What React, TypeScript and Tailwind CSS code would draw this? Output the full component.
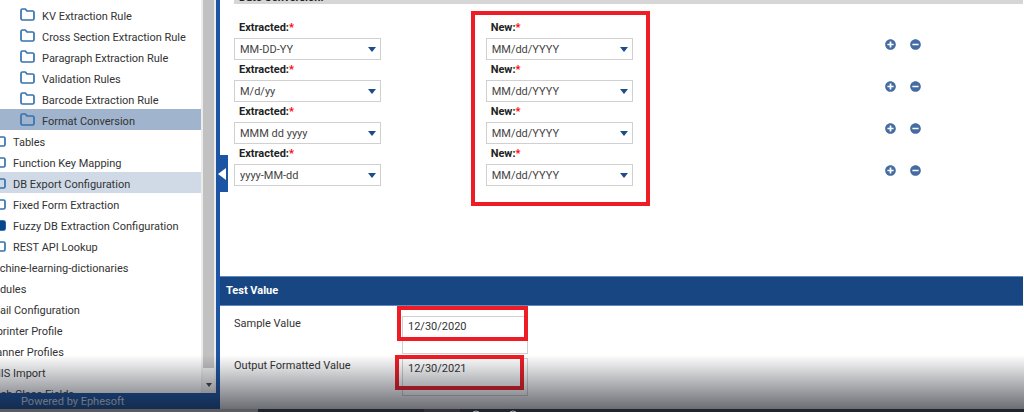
import { FaMinusCircle, FaPlusCircle } from "react-icons/fa";

const folders = [
  { name: "KV Extraction Rule" },
  { name: "Cross Section Extraction Rule" },
  { name: "Paragraph Extraction Rule" },
  { name: "Validation Rules" },
  { name: "Barcode Extraction Rule" },
  { name: "Format Conversion", selected: true },
];

const sections = [
  { name: "Tables" },
  { name: "Function Key Mapping" },
  { name: "DB Export Configuration", hovered: true },
  { name: "Fixed Form Extraction" },
  { name: "Fuzzy DB Extraction Configuration", filled: true },
  { name: "REST API Lookup" },
];

const roots = [
  "machine-learning-dictionaries",
  "Modules",
  "Email Configuration",
  "Imprinter Profile",
  "Scanner Profiles",
  "CMIS Import",
  "Batch Class Fields",
];

const conversions = ["MM-DD-YY", "M/d/yy", "MMM dd yyyy", "yyyy-MM-dd"];

function FolderIcon({ filled }: { filled?: boolean }) {
  return (
    <svg
      width="15"
      height="13"
      viewBox="0 0 15 13"
      fill={filled ? "#06468c" : "none"}
      stroke={filled ? "#06468c" : "#3672ad"}
      strokeWidth="1.7"
      strokeLinejoin="round"
      className="shrink-0"
    >
      <path d="M1 10.500v-8Q1 1 2.500 1H5.300L7 3h5.500Q14 3 14 4.500v6Q14 12 12.500 12h-10Q1 12 1 10.500z" />
    </svg>
  );
}

function TreeItem({ name, className = "", icon }: any) {
  return (
    <li>
      <a href="#" className={`flex h-[21px] items-center gap-[7px] whitespace-nowrap ${className}`}>
        {icon}
        <span className="pt-[5px]">{name}</span>
      </a>
    </li>
  );
}

function Sidebar() {
  return (
    <aside className="flex w-[216px] shrink-0 flex-col">
      <div className="flex min-h-0 flex-1">
        <nav className="min-w-0 flex-1 overflow-hidden pt-1">
          <ul className="-ml-4">
            {folders.map((item) => (
              <TreeItem
                key={item.name}
                name={item.name}
                icon={<FolderIcon />}
                className={item.selected ? "bg-[#a1b4ce] pl-9" : "pl-9"}
              />
            ))}
            {sections.map((item) => (
              <TreeItem
                key={item.name}
                name={item.name}
                icon={<FolderIcon filled={item.filled} />}
                className={item.hovered ? "bg-[#d0dae7] pl-[7px]" : "pl-[7px]"}
              />
            ))}
            {roots.map((name) => (
              <TreeItem key={name} name={name} />
            ))}
          </ul>
        </nav>
        <div className="flex w-[15px] flex-col items-center border-x-2 border-[#ececec] bg-[#f1f1f1]">
          <div className="w-full flex-1 bg-[#c1c1c1]" />
          <div className="flex h-[25px] items-center pt-2">
            <svg width="6" height="4" viewBox="0 0 6 4" fill="#444">
              <path d="M0 0h6L3 4z" />
            </svg>
          </div>
        </div>
      </div>
      <footer className="flex h-4 items-center bg-[#1b55a3] pl-[21px] pt-0.5 text-[#d9e2ee]">
        Powered by Ephesoft
      </footer>
    </aside>
  );
}

function DateSelect({ id, label, value }: any) {
  return (
    <div className="w-[147px]">
      <label htmlFor={id} className="flex h-5 items-center pl-[5px] font-bold text-[#222]">
        {label}:<span className="text-[#f00]">*</span>
      </label>
      <div className="relative">
        <select
          id={id}
          className="block h-[22px] w-full appearance-none border border-[#d0d0d0] bg-white pl-[5px] pt-0.5 text-[#444]"
        >
          <option>{value}</option>
        </select>
        <svg
          width="8"
          height="5"
          viewBox="0 0 8 5"
          fill="#1c4c8c"
          className="pointer-events-none absolute right-[5px] top-[9px]"
        >
          <path d="M0 0h8L4 5z" />
        </svg>
      </div>
    </div>
  );
}

function ConversionRow({ value, index }: any) {
  return (
    <div className="grid grid-cols-[252fr_252fr_286fr]">
      <DateSelect id={`extracted-${index}`} label="Extracted" value={value} />
      <DateSelect id={`new-${index}`} label="New" value="MM/dd/YYYY" />
      <div className="flex items-center justify-center gap-[14px] pl-[45px] pt-[10px] text-[11px] text-[#446ca3]">
        <button aria-label="Add">
          <FaPlusCircle />
        </button>
        <button aria-label="Remove">
          <FaMinusCircle />
        </button>
      </div>
    </div>
  );
}

function TestField({ id, label, value, mark }: any) {
  return (
    <div className="flex h-[42px] pl-[14px]">
      <label htmlFor={id} className="w-[168px] text-[#333]">
        {label}
      </label>
      <div className="relative h-[38px] w-[126px]">
        <textarea
          id={id}
          defaultValue={value}
          className="block h-full w-full resize-none overflow-hidden border border-[#d0d0d0] px-[5px] pt-0.5 text-[#333]"
        />
        <div className={`pointer-events-none absolute h-[35px] border-4 border-[#ee1c25] ${mark}`} />
      </div>
    </div>
  );
}

export default function App() {
  return (
    <div className="relative flex h-screen flex-col overflow-hidden bg-white font-[Roboto,sans-serif] text-[11px] leading-4 text-[#333]">
      <div className="flex min-h-0 flex-1">
        <Sidebar />
        <div className="relative w-1 shrink-0 bg-[#1b55a3]">
          <button
            aria-label="Collapse"
            className="absolute left-0 top-[155px] z-10 flex h-[37px] w-3 items-center justify-center bg-[#1b55a3]"
          >
            <svg width="8" height="12" viewBox="0 0 8 12" fill="#fff">
              <path d="M8 0v12L0 6z" />
            </svg>
          </button>
        </div>
        <main className="mr-px flex min-w-0 flex-1 flex-col">
          <section className="flex h-[276px] flex-col overflow-hidden pl-[14px]">
            <div className="flex h-1 items-end bg-[#d6d6d6] pl-[5px] font-bold text-[#222]">
              <h2 className="-mb-0.5">Date Conversion:</h2>
            </div>
            <div className="relative mt-[14px]">
              {conversions.map((value, index) => (
                <ConversionRow key={value} value={value} index={index} />
              ))}
              <div className="pointer-events-none absolute -top-[7px] left-[calc(32%-15px)] h-[195px] w-[179px] border-4 border-[#ee1c25]" />
            </div>
          </section>
          <h2 className="flex h-[30px] items-center border-y border-[#5f8abf] bg-[#174682] pl-[6px] font-bold text-white">
            Test Value
          </h2>
          <section className="pt-[10px]">
            <TestField id="sample" label="Sample Value" value="12/30/2020" mark="-left-[5px] -top-[10px] w-[131px]" />
            <TestField id="output" label="Output Formatted Value" value="12/30/2021" mark="-left-[7px] -top-[3px] w-[129px]" />
          </section>
        </main>
      </div>
      <div className="pointer-events-none absolute inset-x-0 bottom-[3px] z-20 h-[54px] bg-linear-to-b from-[#10141f]/0 to-[#10141f]/62" />
      <div className="flex h-[3px] shrink-0 bg-[#22242b]">
        <div className="w-[258px] bg-[#5b5c61]" />
        <div className="w-[166px]" />
        <div className="w-9 bg-[#303138]" />
        <svg width="64" height="3" viewBox="0 0 64 3" fill="none" stroke="#a5adbd">
          <path d="M13 3q3-2 6 0M50 3q3-2 6 0" />
        </svg>
      </div>
    </div>
  );
}
